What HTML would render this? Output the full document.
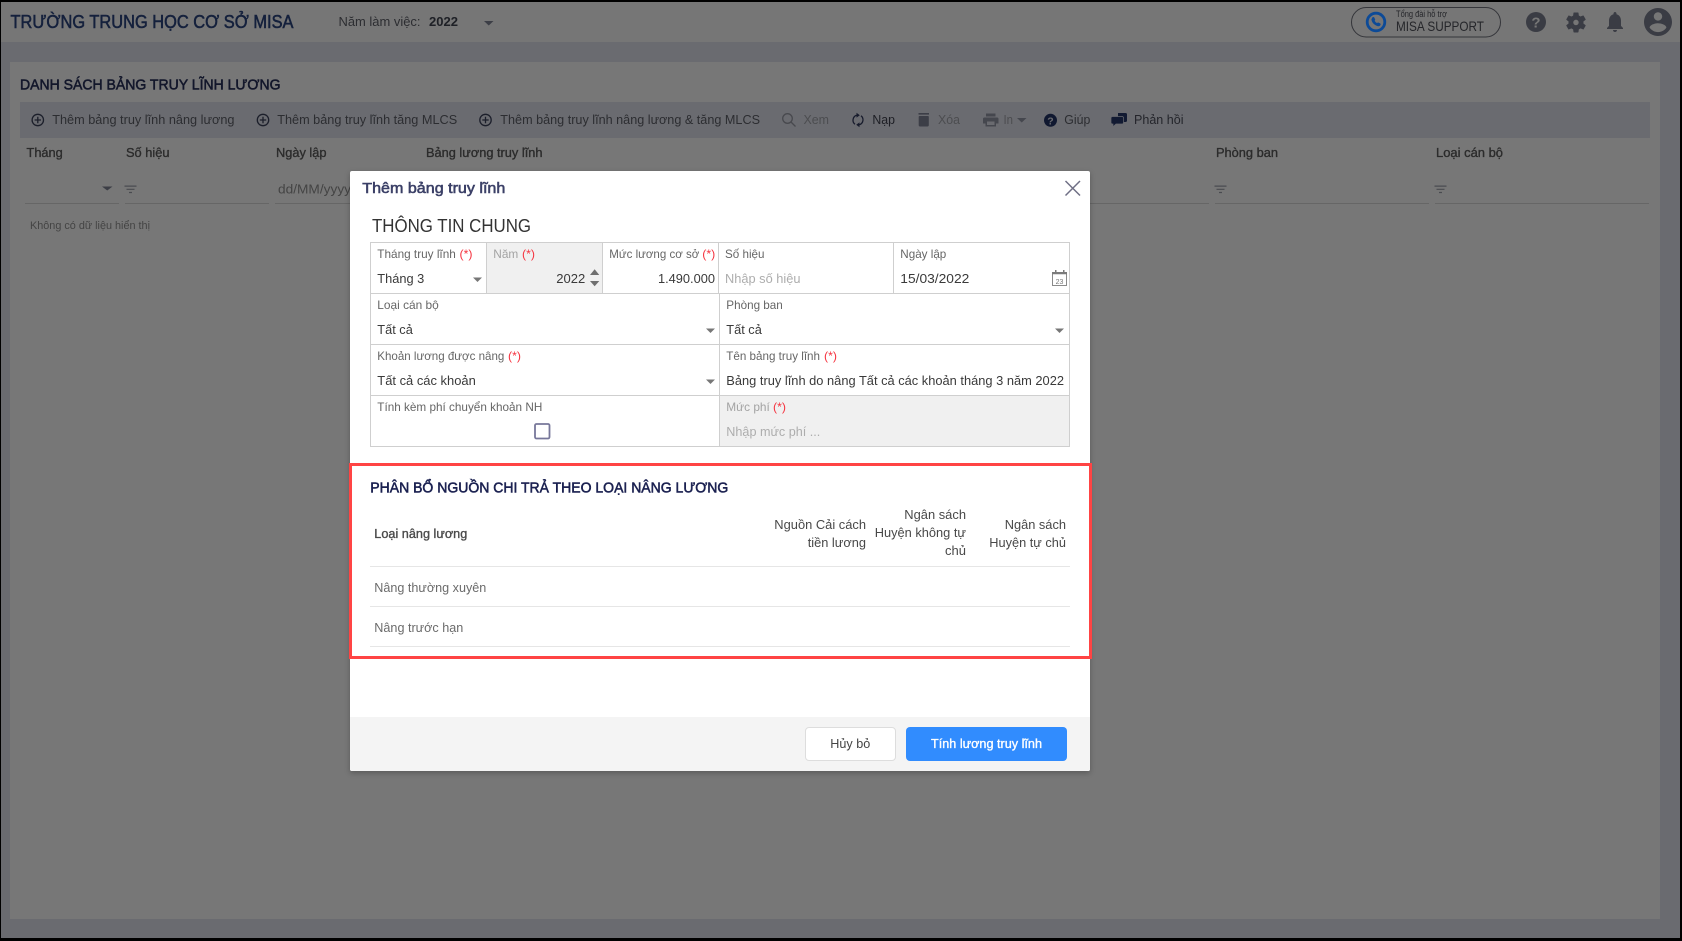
<!DOCTYPE html>
<html lang="vi"><head><meta charset="utf-8"><title>Thêm bảng truy lĩnh</title>
<style>
html,body{margin:0;padding:0;width:1682px;height:941px;overflow:hidden;background:#000}
*{box-sizing:border-box}
#app{position:absolute;left:1px;top:2px;width:1679px;height:936px;background:#6a6b70;overflow:hidden}
.abs{position:absolute}
svg{position:absolute;left:0;top:0;width:1682px;height:941px;overflow:visible}
text{font-family:"Liberation Sans",Arial,sans-serif;font-size:13px;fill:#333}
.m{stroke-width:.35px;paint-order:stroke}
.b{stroke-width:.55px;paint-order:stroke}
.d1{fill:#2c2d31}
.off{fill:#4c4d50}
.lb{font-size:12px;fill:#666}
.val{fill:#3a3a3a}
.ph{fill:#adadad}
.red{font-size:12px;fill:#f5333f}
.gl{fill:#a3a3a3}
.rows{fill:#6b6b6b}
.th{fill:#484848}
</style></head><body>
<div id="app"></div>
<div class="abs" style="left:1px;top:2px;width:1679px;height:40px;background:#767676"></div>
<div class="abs" style="left:10px;top:62px;width:1650px;height:857px;background:#777"></div>
<div class="abs" style="left:20px;top:102px;width:1630px;height:36px;background:#6a6b70"></div>

<svg viewBox="0 0 1682 941" xmlns="http://www.w3.org/2000/svg">
<!-- header -->
<text x="10.5" y="28" style="font-size:18px;fill:#14203c;stroke:#14203c" class="b" textLength="283" lengthAdjust="spacingAndGlyphs">TRƯỜNG TRUNG HỌC CƠ SỞ MISA</text>
<text x="338.5" y="26" class="d1" textLength="82" lengthAdjust="spacingAndGlyphs">Năm làm việc:</text>
<text x="429" y="26" style="font-weight:bold;fill:#1e2026" textLength="29" lengthAdjust="spacingAndGlyphs">2022</text>
<path d="M484 21h9.500l-4.750 4.500z" fill="#3c3e46"/>

<rect x="1351.500" y="7.500" width="149" height="29.500" rx="14.700" fill="none" stroke="#34353a"/>
<circle cx="1376" cy="22" r="8.800" fill="none" stroke="#0c4a97" stroke-width="2.800"/>
<path d="M1372 17.800c.9-1 1.900-1 2.400 0l.7 1.400c.2.600 0 1-.5 1.400.5 1.100 1.400 2 2.500 2.500.4-.5.800-.7 1.400-.5l1.400.7c1 .5 1 1.500 0 2.400-1.100.9-2.800.7-4.700-.7-1.700-1.100-3-2.600-3.500-4.300-.4-1.100-.3-1.800.3-2.400z" fill="#0c4a97"/>
<text x="1396" y="17" style="font-size:9px;fill:#25262a" textLength="51" lengthAdjust="spacingAndGlyphs">Tổng đài hỗ trợ</text>
<text x="1396" y="31" style="font-size:14px;fill:#25262a" textLength="88" lengthAdjust="spacingAndGlyphs">MISA SUPPORT</text>
<circle cx="1536" cy="22" r="10" fill="#3a3c44"/>
<text x="1536" y="27.500" text-anchor="middle" style="font-size:15px;font-weight:bold;fill:#777">?</text>
<path transform="translate(1563.500 10) scale(1.04)" fill="#3a3c44" d="M19.140 12.940c.04-.3.06-.61.06-.94 0-.32-.02-.64-.07-.94l2.030-1.580a.49.49 0 0 0 .12-.61l-1.920-3.320a.488.488 0 0 0-.59-.22l-2.390.96c-.5-.38-1.030-.7-1.620-.94l-.36-2.540a.484.484 0 0 0-.48-.41h-3.840c-.24 0-.43.17-.47.41l-.36 2.540c-.59.24-1.130.57-1.620.94l-2.390-.96c-.22-.08-.47 0-.59.22L2.740 8.870c-.12.21-.08.47.12.61l2.030 1.580c-.05.3-.09.63-.09.94s.02.64.07.94l-2.030 1.580a.49.49 0 0 0-.12.61l1.920 3.320c.12.22.37.29.59.22l2.390-.96c.5.38 1.030.7 1.620.94l.36 2.540c.05.24.24.41.48.41h3.840c.24 0 .44-.17.47-.41l.36-2.540c.59-.24 1.130-.56 1.620-.94l2.390.96c.22.08.47 0 .59-.22l1.920-3.320c.12-.22.07-.47-.12-.61l-2.010-1.580zM12 14.600c-1.430 0-2.600-1.170-2.600-2.600s1.170-2.600 2.600-2.600 2.600 1.170 2.600 2.600-1.170 2.600-2.600 2.600z"/>
<path transform="translate(1603 9.400) scale(1 1.03)" fill="#3a3c44" d="M12 22c1.100 0 2-.9 2-2h-4c0 1.100.89 2 2 2zm6-6v-5c0-3.070-1.640-5.640-4.500-6.320V4c0-.83-.67-1.500-1.500-1.500s-1.500.67-1.500 1.500v.68C7.630 5.360 6 7.920 6 11v5l-2 2v1h16v-1l-2-2z"/>
<path transform="translate(1641.200 5.200) scale(1.4)" fill="#3a3c44" d="M12 2C6.480 2 2 6.480 2 12s4.480 10 10 10 10-4.480 10-10S17.520 2 12 2zm0 3c1.660 0 3 1.340 3 3s-1.340 3-3 3-3-1.340-3-3 1.340-3 3-3zm0 14.200c-2.500 0-4.710-1.280-6-3.220.03-1.990 4-3.080 6-3.080 1.990 0 5.970 1.090 6 3.080-1.290 1.940-3.500 3.220-6 3.220z"/>

<!-- page title -->
<text x="20" y="89.500" style="font-size:15px;fill:#12162a;stroke:#12162a" class="b" textLength="260.500" lengthAdjust="spacingAndGlyphs">DANH SÁCH BẢNG TRUY LĨNH LƯƠNG</text>

<!-- toolbar -->
<g fill="none" stroke="#1c1f2b" stroke-width="1.300">
<circle cx="37.800" cy="120" r="5.700"/><path d="M37.800 116.800v6.400M34.600 120h6.400"/>
<circle cx="263" cy="120" r="5.700"/><path d="M263 116.800v6.400M259.800 120h6.400"/>
<circle cx="485.500" cy="120" r="5.700"/><path d="M485.500 116.800v6.400M482.300 120h6.400"/>
</g>
<text x="52.200" y="124" class="d1" textLength="182.300" lengthAdjust="spacingAndGlyphs">Thêm bảng truy lĩnh nâng lương</text>
<text x="277.200" y="124" class="d1" textLength="180" lengthAdjust="spacingAndGlyphs">Thêm bảng truy lĩnh tăng MLCS</text>
<text x="500.300" y="124" class="d1" textLength="259.700" lengthAdjust="spacingAndGlyphs">Thêm bảng truy lĩnh nâng lương &amp; tăng MLCS</text>

<g fill="none" stroke="#48494e" stroke-width="1.300"><circle cx="787.500" cy="118.500" r="4.800"/><path d="M791 122l4.500 4.500"/></g>
<text x="803.500" y="124" class="off" textLength="25.500" lengthAdjust="spacingAndGlyphs">Xem</text>
<g fill="none" stroke="#171b2c" stroke-width="1.300"><path d="M856.500 115.300a5.200 5.200 0 0 0-1.500 9"/><path d="M859.500 124.700a5.200 5.200 0 0 0 1.500-9"/></g>
<path d="M856.500 112.800l3.300 2.400-3.300 2.400zM859.500 127.200l-3.300-2.400 3.300-2.400z" fill="#171b2c"/>
<text x="872.400" y="124" style="fill:#1d1e24" textLength="22.600" lengthAdjust="spacingAndGlyphs">Nạp</text>
<path d="M918.500 113h10.500v1.600h-10.500zM919.500 116h8.500a.8.8 0 0 1 .8.8v8.500a1.200 1.200 0 0 1-1.200 1.200h-7.700a1.200 1.200 0 0 1-1.200-1.200v-8.500a.8.8 0 0 1 .8-.8z" fill="#3c3e47"/>
<text x="938" y="124" class="off" textLength="22" lengthAdjust="spacingAndGlyphs">Xóa</text>
<path d="M986 113.500h9.500v3H986zM984.500 117.500h12.500a1.500 1.500 0 0 1 1.500 1.500v4.500h-2.500v3h-10.500v-3h-2.500V119a1.500 1.500 0 0 1 1.500-1.500zM987 121.500v3.500h7.500v-3.500z" fill="#45474e" fill-rule="evenodd"/>
<text x="1003.500" y="124" class="off" textLength="9.500" lengthAdjust="spacingAndGlyphs">In</text>
<path d="M1017 118h9.500l-4.750 4.500z" fill="#45474e"/>
<circle cx="1050.500" cy="120.300" r="6.500" fill="#101830"/>
<text x="1050.500" y="124.300" text-anchor="middle" style="font-size:10.500px;font-weight:bold;fill:#6a6b70">?</text>
<text x="1064.300" y="124" class="d1" textLength="26" lengthAdjust="spacingAndGlyphs">Giúp</text>
<path d="M1118 113h7.500a1.500 1.500 0 0 1 1.500 1.500v6a1.500 1.500 0 0 1-1.500 1.500h-7.500z" fill="#121a32"/>
<path d="M1113.500 116.500h8.500a1.500 1.500 0 0 1 1.500 1.500v4.500a1.500 1.500 0 0 1-1.500 1.500h-6l-3 2.700v-2.700h-.5a1.500 1.500 0 0 1-1.500-1.500V118a1.500 1.500 0 0 1 1.500-1.500z" fill="#121a32" stroke="#6a6b70" stroke-width=".7"/>
<text x="1134" y="124" style="fill:#24252b" textLength="49.500" lengthAdjust="spacingAndGlyphs">Phản hồi</text>

<!-- grid header -->
<text x="26.500" y="157" class="m" style="fill:#2b2b2b;stroke:#2b2b2b" textLength="36.300" lengthAdjust="spacingAndGlyphs">Tháng</text>
<text x="126" y="157" class="m" style="fill:#2b2b2b;stroke:#2b2b2b" textLength="43.500" lengthAdjust="spacingAndGlyphs">Số hiệu</text>
<text x="276" y="157" class="m" style="fill:#2b2b2b;stroke:#2b2b2b" textLength="50.500" lengthAdjust="spacingAndGlyphs">Ngày lập</text>
<text x="426" y="157" class="m" style="fill:#2b2b2b;stroke:#2b2b2b" textLength="116.500" lengthAdjust="spacingAndGlyphs">Bảng lương truy lĩnh</text>
<text x="1216" y="157" class="m" style="fill:#2b2b2b;stroke:#2b2b2b" textLength="62" lengthAdjust="spacingAndGlyphs">Phòng ban</text>
<text x="1436" y="157" class="m" style="fill:#2b2b2b;stroke:#2b2b2b" textLength="67" lengthAdjust="spacingAndGlyphs">Loại cán bộ</text>
<path d="M102 186.500h10.500l-5.250 4z" fill="#3c3e46"/>
<g fill="#4a4b50">
<path d="M124.500 185.500h12v1.200h-12zM126.500 188.700h8v1.200h-8zM129 191.900h3v1.200h-3z"/>
<path d="M1214.500 185.500h12v1.200h-12zM1216.500 188.700h8v1.200h-8zM1219 191.900h3v1.200h-3z"/>
<path d="M1434.500 185.500h12v1.200h-12zM1436.500 188.700h8v1.200h-8zM1439 191.900h3v1.200h-3z"/>
</g>
<text x="278" y="193.500" style="fill:#444" textLength="73" lengthAdjust="spacingAndGlyphs">dd/MM/yyyy</text>
<g fill="#666">
<rect x="25" y="203" width="94" height="1"/><rect x="125" y="203" width="144" height="1"/><rect x="275" y="203" width="934" height="1"/><rect x="1215" y="203" width="214" height="1"/><rect x="1435" y="203" width="214" height="1"/>
</g>
<text x="30" y="229" style="font-size:11px;fill:#444" textLength="120" lengthAdjust="spacingAndGlyphs">Không có dữ liệu hiển thị</text>
</svg>

<!-- modal -->
<div class="abs" style="left:350px;top:171px;width:740px;height:600px;background:#fff;border-radius:2px;box-shadow:0 2px 6px rgba(0,0,0,.25)"></div>
<div class="abs" style="left:350px;top:717px;width:740px;height:54px;background:#f4f4f4;border-radius:0 0 2px 2px"></div>
<!-- form cells backgrounds -->
<div class="abs" style="left:486px;top:242px;width:117px;height:52px;background:#f0f0f0"></div>
<div class="abs" style="left:719px;top:395px;width:351px;height:52px;background:#f0f0f0"></div>
<!-- red box -->
<div class="abs" style="left:349px;top:463px;width:743px;height:196px;border:3px solid #ff4444"></div>
<!-- buttons -->
<div class="abs" style="left:805px;top:727px;width:91px;height:34px;background:#fff;border:1px solid #ddd;border-radius:4px"></div>
<div class="abs" style="left:906px;top:727px;width:161px;height:34px;background:#318cfe;border-radius:4px"></div>

<svg viewBox="0 0 1682 941" xmlns="http://www.w3.org/2000/svg">
<text x="362.300" y="193" style="font-size:15px;fill:#3a3f66;stroke:#3a3f66" class="b" textLength="143" lengthAdjust="spacingAndGlyphs">Thêm bảng truy lĩnh</text>
<path d="M1065.500 181l14.500 14.500M1080 181l-14.500 14.500" stroke="#6f6f85" stroke-width="1.500" fill="none"/>
<text x="372" y="232" style="font-size:18px;fill:#333" textLength="159" lengthAdjust="spacingAndGlyphs">THÔNG TIN CHUNG</text>

<!-- form grid lines -->
<g fill="none" stroke="#cfcfcf" stroke-width="1" shape-rendering="crispEdges">
<rect x="370.500" y="242.500" width="699" height="204"/>
<path d="M371 293.500h699M371 344.500h699M371 395.500h699"/>
<path d="M486.500 243v50M602.500 243v50M718.500 243v50M893.500 243v50M719.500 294v152"/>
</g>

<!-- row 1 -->
<text x="377.300" y="258" class="lb" textLength="78.500" lengthAdjust="spacingAndGlyphs">Tháng truy lĩnh</text>
<text x="459.500" y="258" class="red" textLength="13" lengthAdjust="spacingAndGlyphs">(*)</text>
<text x="377.300" y="283" class="val" textLength="47" lengthAdjust="spacingAndGlyphs">Tháng 3</text>
<path d="M473 277.500h9l-4.500 4.500z" fill="#777"/>
<text x="493.300" y="258" class="lb gl" style="fill:#a3a3a3" textLength="25" lengthAdjust="spacingAndGlyphs">Năm</text>
<text x="522" y="258" class="red" textLength="13" lengthAdjust="spacingAndGlyphs">(*)</text>
<text x="556.300" y="283" class="val" textLength="29" lengthAdjust="spacingAndGlyphs">2022</text>
<path d="M590 275h9.300l-4.650-5.700zM590 281h9.300l-4.650 5.200z" fill="#6f6f6f"/>
<text x="609.300" y="258" class="lb" textLength="90" lengthAdjust="spacingAndGlyphs">Mức lương cơ sở</text>
<text x="702.300" y="258" class="red" textLength="13" lengthAdjust="spacingAndGlyphs">(*)</text>
<text x="658" y="283" class="val" textLength="57" lengthAdjust="spacingAndGlyphs">1.490.000</text>
<text x="725" y="258" class="lb" textLength="39.500" lengthAdjust="spacingAndGlyphs">Số hiệu</text>
<text x="725" y="283" class="ph" textLength="75.500" lengthAdjust="spacingAndGlyphs">Nhập số hiệu</text>
<text x="900.300" y="258" class="lb" textLength="46" lengthAdjust="spacingAndGlyphs">Ngày lập</text>
<text x="900.300" y="283" class="val" textLength="69" lengthAdjust="spacingAndGlyphs">15/03/2022</text>
<rect x="1052.500" y="272.500" width="14" height="13" fill="none" stroke="#8a8a8a" stroke-width="1"/>
<path d="M1052 272h15v2.300h-15zM1055 270h1.500v2h-1.500zM1063 270h1.500v2h-1.500z" fill="#7b7b7b"/>
<text x="1059.500" y="284" text-anchor="middle" style="font-size:7px;fill:#777">23</text>

<!-- row 2 -->
<text x="377.300" y="309" class="lb" textLength="61.500" lengthAdjust="spacingAndGlyphs">Loại cán bộ</text>
<text x="377.300" y="334" class="val" textLength="35.500" lengthAdjust="spacingAndGlyphs">Tất cả</text>
<path d="M706 328.500h9l-4.500 4.500z" fill="#777"/>
<text x="726.300" y="309" class="lb" textLength="56.500" lengthAdjust="spacingAndGlyphs">Phòng ban</text>
<text x="726.300" y="334" class="val" textLength="35.500" lengthAdjust="spacingAndGlyphs">Tất cả</text>
<path d="M1055 328.500h9l-4.500 4.500z" fill="#777"/>

<!-- row 3 -->
<text x="377.300" y="360" class="lb" textLength="127" lengthAdjust="spacingAndGlyphs">Khoản lương được nâng</text>
<text x="508" y="360" class="red" textLength="13" lengthAdjust="spacingAndGlyphs">(*)</text>
<text x="377.300" y="385" class="val" textLength="98.500" lengthAdjust="spacingAndGlyphs">Tất cả các khoản</text>
<path d="M706 379.500h9l-4.500 4.500z" fill="#777"/>
<text x="726.300" y="360" class="lb" textLength="93.700" lengthAdjust="spacingAndGlyphs">Tên bảng truy lĩnh</text>
<text x="824" y="360" class="red" textLength="13" lengthAdjust="spacingAndGlyphs">(*)</text>
<text x="726.300" y="385" class="val" textLength="337.700" lengthAdjust="spacingAndGlyphs">Bảng truy lĩnh do nâng Tất cả các khoản tháng 3 năm 2022</text>

<!-- row 4 -->
<text x="377.300" y="411" class="lb" textLength="165" lengthAdjust="spacingAndGlyphs">Tính kèm phí chuyển khoản NH</text>
<rect x="535" y="424" width="14.500" height="14.500" rx="1.500" fill="#fff" stroke="#77779a" stroke-width="1.800"/>
<text x="726.300" y="411" class="lb" style="fill:#a3a3a3" textLength="43.500" lengthAdjust="spacingAndGlyphs">Mức phí</text>
<text x="773" y="411" class="red" textLength="13" lengthAdjust="spacingAndGlyphs">(*)</text>
<text x="726.300" y="436" class="ph" textLength="94" lengthAdjust="spacingAndGlyphs">Nhập mức phí ...</text>

<!-- allocation table -->
<text x="370.300" y="492.500" style="font-size:15px;fill:#1a2050;stroke:#1a2050" class="b" textLength="358" lengthAdjust="spacingAndGlyphs">PHÂN BỔ NGUỒN CHI TRẢ THEO LOẠI NÂNG LƯƠNG</text>
<text x="374.300" y="538" style="fill:#4a4a4a;stroke:#4a4a4a" class="m" textLength="93" lengthAdjust="spacingAndGlyphs">Loại nâng lương</text>

<text x="774.300" y="529" class="th" textLength="91.700" lengthAdjust="spacingAndGlyphs">Nguồn Cải cách</text>
<text x="807.700" y="547" class="th" textLength="58.300" lengthAdjust="spacingAndGlyphs">tiền lương</text>
<text x="904.300" y="519" class="th" textLength="61.700" lengthAdjust="spacingAndGlyphs">Ngân sách</text>
<text x="874.700" y="537" class="th" textLength="91.300" lengthAdjust="spacingAndGlyphs">Huyện không tự</text>
<text x="945" y="555" class="th" textLength="21" lengthAdjust="spacingAndGlyphs">chủ</text>
<text x="1004.700" y="529" class="th" textLength="61.300" lengthAdjust="spacingAndGlyphs">Ngân sách</text>
<text x="989.300" y="547" class="th" textLength="76.700" lengthAdjust="spacingAndGlyphs">Huyện tự chủ</text>

<g fill="#e6e6e6"><rect x="370" y="566" width="700" height="1"/><rect x="370" y="606" width="700" height="1"/><rect x="370" y="646" width="700" height="1"/></g>
<text x="374.300" y="592" class="rows" textLength="112" lengthAdjust="spacingAndGlyphs">Nâng thường xuyên</text>
<text x="374.300" y="632" class="rows" textLength="89" lengthAdjust="spacingAndGlyphs">Nâng trước hạn</text>

<!-- buttons -->
<text x="830.300" y="748" style="fill:#444" textLength="40" lengthAdjust="spacingAndGlyphs">Hủy bỏ</text>
<text x="931" y="748" style="fill:#fff;stroke:#fff" class="m" textLength="111" lengthAdjust="spacingAndGlyphs">Tính lương truy lĩnh</text>
</svg>
</body></html>
